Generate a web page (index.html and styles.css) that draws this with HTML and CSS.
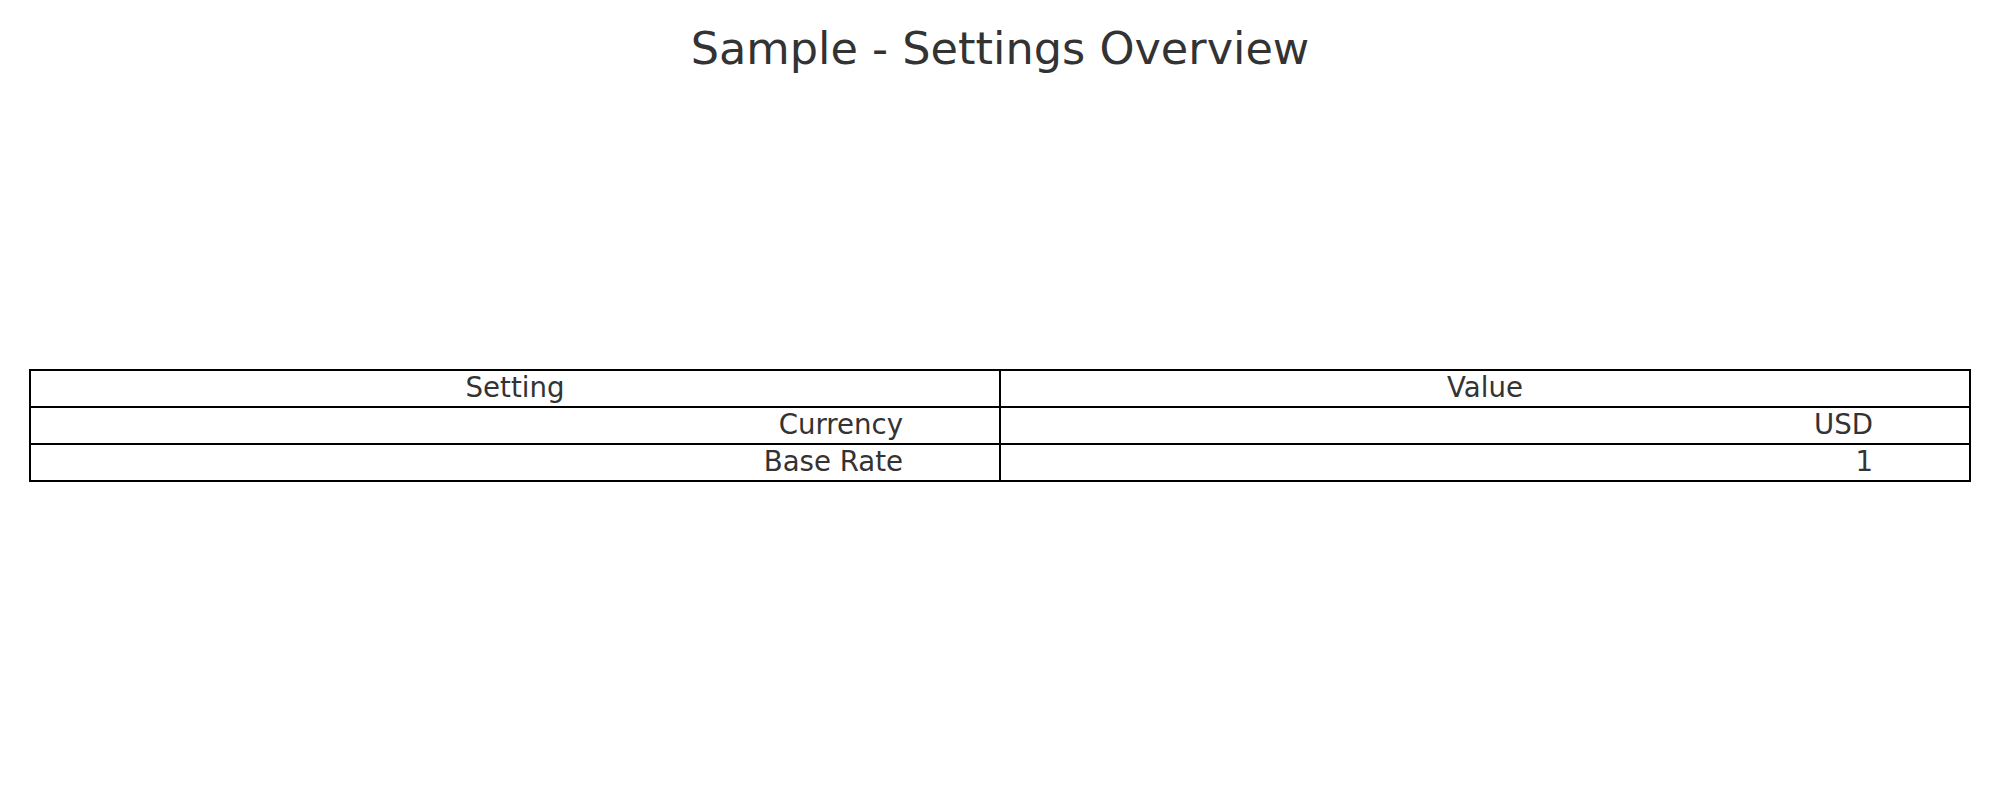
FILE: index.html
```html
<!DOCTYPE html>
<html lang="en">
<head>
<meta charset="utf-8">
<title>Sample - Settings Overview</title>
<link rel="stylesheet" href="styles.css">
</head>
<body>
<main class="page">
  <h1 class="title">Sample - Settings Overview</h1>
  <div class="table">
    <div class="cell head">Setting</div>
    <div class="cell head">Value</div>
    <div class="cell num">Currency</div>
    <div class="cell num">USD</div>
    <div class="cell num">Base Rate</div>
    <div class="cell num">1</div>
  </div>
</main>
</body>
</html>
```

FILE: styles.css
```css
html, body {
  margin: 0;
  padding: 0;
  background: #ffffff;
}

.page {
  width: 2000px;
  height: 800px;
  font-family: "DejaVu Sans", sans-serif;
  color: #333333;
  display: flex;
  flex-direction: column;
  align-items: center;
}

.title {
  margin: 0;
  padding-top: 23px;
  font-size: 44.6px;
  font-weight: normal;
  line-height: 52px;
  text-align: center;
}

.table {
  margin-top: 294px;
  width: 1940px;
  display: grid;
  grid-template-columns: 1fr 1fr;
  grid-auto-rows: 37px;
  border-top: 2px solid #000000;
  border-left: 2px solid #000000;
}

.cell {
  border-right: 2px solid #000000;
  border-bottom: 2px solid #000000;
  font-size: 27.6px;
  line-height: 34px;
  white-space: nowrap;
}

.head {
  text-align: center;
}

.num {
  text-align: right;
  padding-right: 96px;
}
```
